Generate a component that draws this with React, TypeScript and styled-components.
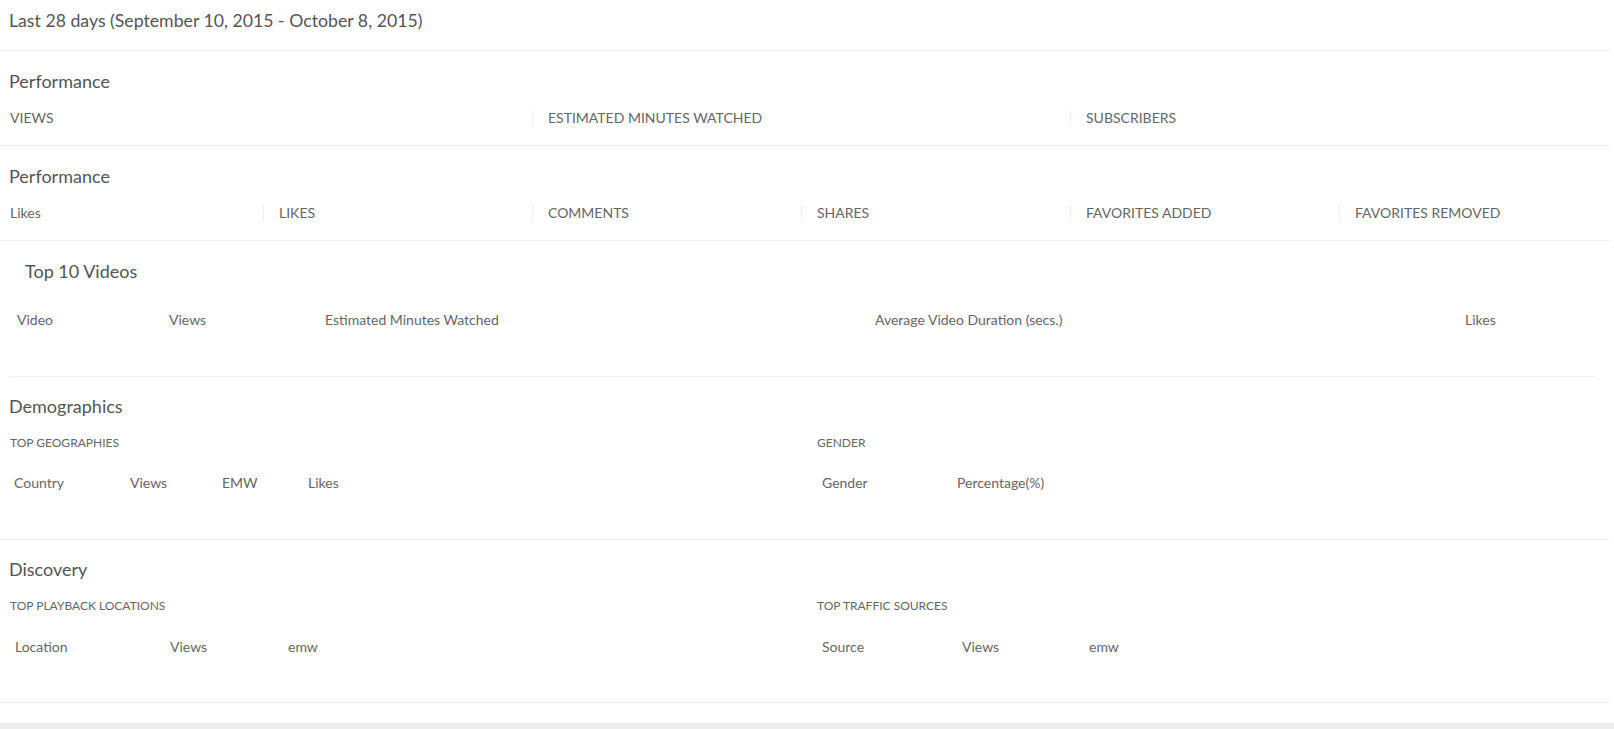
import React from 'react';
import styled, { createGlobalStyle } from 'styled-components';

const COLORS = {
  TEXT: '#555555',
  LABEL: '#666666',
  BORDER: '#eeeeee',
  FOOTER: '#eeeeee'
};

const ROW_WIDTH = 1614;

const GlobalStyle = createGlobalStyle`
  * {
    box-sizing: border-box;
  }

  body {
    margin: 0;
    background: #ffffff;
    color: ${COLORS.TEXT};
    font-family: Lato, 'Open Sans', sans-serif;
  }
`;

const Page = styled.div`
  width: 1610px;
`;

const DateRange = styled.div`
  height: 51px;
  padding: 11px 9px 0;
  border-bottom: 1px solid ${COLORS.BORDER};
  font-size: 17.7px;
  line-height: 20px;
`;

const Section = styled.section<{ $inset?: boolean }>`
  padding: ${({ $inset }) => ($inset ? '0 15px 0 9px' : '0 9px')};
  border-bottom: ${({ $inset }) =>
    $inset ? 'none' : `1px solid ${COLORS.BORDER}`};
`;

const SectionBody = styled.div<{ $top: number; $bottom: number; $line?: boolean }>`
  padding-top: ${({ $top }) => $top}px;
  padding-bottom: ${({ $bottom }) => $bottom}px;
  border-bottom: ${({ $line }) => ($line ? `1px solid ${COLORS.BORDER}` : 'none')};
`;

const Title = styled.h2<{ $indent?: number }>`
  margin: 0;
  padding-left: ${({ $indent }) => $indent ?? 0}px;
  font-size: 18px;
  font-weight: 400;
  line-height: 20px;
`;

const MetricRow = styled.div<{ $count: number }>`
  display: grid;
  grid-template-columns: repeat(
    ${({ $count }) => $count},
    ${({ $count }) => ROW_WIDTH / $count}px
  );
  margin: 19px 0 0 -15px;
`;

const Metric = styled.div`
  padding-left: 15px;
  border-left: 1px solid ${COLORS.BORDER};
  font-size: 14px;
  line-height: 16px;
  color: ${COLORS.LABEL};
  text-transform: uppercase;

  &:first-child {
    border-left-color: transparent;
  }
`;

const MetricPlain = styled(Metric)`
  text-transform: none;
`;

const Halves = styled.div`
  display: grid;
  grid-template-columns: ${ROW_WIDTH / 2}px ${ROW_WIDTH / 2}px;
  margin: 20px 0 0 -14px;
`;

const Half = styled.div`
  padding-left: 15px;
`;

const SubLabel = styled.div`
  font-size: 12px;
  line-height: 14px;
  color: ${COLORS.LABEL};
  text-transform: uppercase;
`;

const Table = styled.table<{ $gap: number }>`
  border-collapse: collapse;
  margin-top: ${({ $gap }) => $gap}px;
`;

const HeadCell = styled.th<{ $width?: number; $padY: number; $padX: number }>`
  width: ${({ $width }) => ($width ? `${$width}px` : 'auto')};
  padding: ${({ $padY, $padX }) => `${$padY}px ${$padX}px`};
  font-size: 14px;
  font-weight: 400;
  line-height: 20px;
  text-align: left;
  color: ${COLORS.LABEL};
  white-space: nowrap;
`;

const Footer = styled.div`
  width: 1614px;
  height: 30px;
  margin-top: 20px;
  background: ${COLORS.FOOTER};
`;

type Column = { label: string; width?: number };

const HeaderTable = ({
  columns,
  gap,
  padY,
  padX
}: {
  columns: Column[];
  gap: number;
  padY: number;
  padX: number;
}) => (
  <Table $gap={gap}>
    <thead>
      <tr>
        {columns.map((column) => (
          <HeadCell
            key={column.label}
            $width={column.width}
            $padY={padY}
            $padX={padX}>
            {column.label}
          </HeadCell>
        ))}
      </tr>
    </thead>
    <tbody />
  </Table>
);

const topVideoColumns: Column[] = [
  { label: 'Video', width: 152 },
  { label: 'Views', width: 156 },
  { label: 'Estimated Minutes Watched', width: 550 },
  { label: 'Average Video Duration (secs.)', width: 590 },
  { label: 'Likes' }
];

const geographyColumns: Column[] = [
  { label: 'Country', width: 116 },
  { label: 'Views', width: 92 },
  { label: 'EMW', width: 86 },
  { label: 'Likes' }
];

const genderColumns: Column[] = [
  { label: 'Gender', width: 135 },
  { label: 'Percentage(%)' }
];

const playbackColumns: Column[] = [
  { label: 'Location', width: 155 },
  { label: 'Views', width: 118 },
  { label: 'emw' }
];

const trafficColumns: Column[] = [
  { label: 'Source', width: 140 },
  { label: 'Views', width: 127 },
  { label: 'emw' }
];

const App = () => {
  return (
    <Page>
      <GlobalStyle />
      <DateRange>Last 28 days (September 10, 2015 - October 8, 2015)</DateRange>

      <Section>
        <SectionBody $top={20} $bottom={19}>
          <Title>Performance</Title>
          <MetricRow $count={3}>
            <Metric>Views</Metric>
            <Metric>Estimated Minutes Watched</Metric>
            <Metric>Subscribers</Metric>
          </MetricRow>
        </SectionBody>
      </Section>

      <Section>
        <SectionBody $top={20} $bottom={19}>
          <Title>Performance</Title>
          <MetricRow $count={6}>
            <MetricPlain>Likes</MetricPlain>
            <Metric>Likes</Metric>
            <Metric>Comments</Metric>
            <Metric>Shares</Metric>
            <Metric>Favorites Added</Metric>
            <Metric>Favorites Removed</Metric>
          </MetricRow>
        </SectionBody>
      </Section>

      <Section $inset>
        <SectionBody $top={20} $bottom={38} $line>
          <Title $indent={16}>Top 10 Videos</Title>
          <HeaderTable columns={topVideoColumns} gap={21} padY={8} padX={8} />
        </SectionBody>
      </Section>

      <Section>
        <SectionBody $top={19} $bottom={41}>
          <Title>Demographics</Title>
          <Halves>
            <Half>
              <SubLabel>Top Geographies</SubLabel>
              <HeaderTable columns={geographyColumns} gap={18} padY={5} padX={4} />
            </Half>
            <Half>
              <SubLabel>Gender</SubLabel>
              <HeaderTable columns={genderColumns} gap={18} padY={5} padX={5} />
            </Half>
          </Halves>
        </SectionBody>
      </Section>

      <Section>
        <SectionBody $top={19} $bottom={40}>
          <Title>Discovery</Title>
          <Halves>
            <Half>
              <SubLabel>Top Playback Locations</SubLabel>
              <HeaderTable columns={playbackColumns} gap={19} padY={5} padX={5} />
            </Half>
            <Half>
              <SubLabel>Top Traffic Sources</SubLabel>
              <HeaderTable columns={trafficColumns} gap={19} padY={5} padX={5} />
            </Half>
          </Halves>
        </SectionBody>
      </Section>

      <Footer />
    </Page>
  );
};

export default App;
